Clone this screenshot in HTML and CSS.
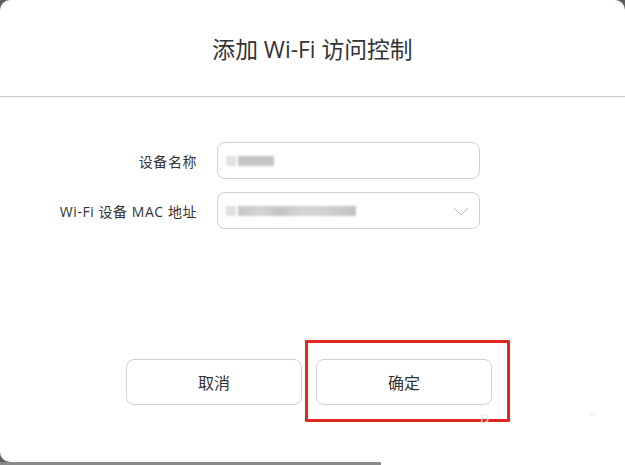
FILE: index.html
```html
<!DOCTYPE html>
<html lang="zh-CN">
<head>
<meta charset="utf-8">
<title>添加 Wi-Fi 访问控制</title>
<link rel="stylesheet" href="styles.css">
</head>
<body>
<div class="frame">
  <div class="modal">
    <div class="header"><h1 class="title">添加 Wi-Fi 访问控制</h1></div>
    <div class="form">
      <div class="row">
        <label class="label">设备名称</label>
        <div class="field">
          <span class="blur b1"></span><span class="blur b2"></span>
        </div>
      </div>
      <div class="row">
        <label class="label">Wi-Fi 设备 MAC 地址</label>
        <div class="field">
          <span class="blur b3"></span><span class="blur b4"></span>
          <svg class="chev" width="16" height="9" viewBox="0 0 16 9"><polyline points="1,1 8,8 15,1" fill="none" stroke="#b8b8b8" stroke-width="1"/></svg>
        </div>
      </div>
    </div>
    <div class="actions">
      <button class="btn">取消</button>
      <button class="btn">确定</button>
    </div>
    <div class="mark"></div>
    <span class="ghost g1">D</span><span class="ghost g2">^</span>
  </div>
  <div class="strip"><span class="strip-gray"></span><span class="strip-white"></span></div>
</div>
</body>
</html>
```
FILE: styles.css
```css
* { box-sizing: border-box; }
html, body { margin: 0; padding: 0; }
body {
  width: 625px;
  height: 465px;
  overflow: hidden;
  font-family: "Open Sans", "Noto Sans CJK SC", sans-serif;
  color: #333;
  background: #fff;
}
.frame {
  width: 625px;
  height: 465px;
  background: #5e5e5e;
  display: flex;
  flex-direction: column;
}
.modal {
  position: relative;
  width: 625px;
  height: 462px;
  background: #fff;
  border-radius: 10px 10px 0 10px;
}
.header {
  height: 97px;
  border-bottom: 1px solid #c9c9c9;
  display: flex;
  align-items: center;
  justify-content: center;
}
.title {
  margin: 0;
  font-size: 22.8px;
  font-weight: 400;
  color: #333;
}
.form {
  padding-top: 45px;
  display: flex;
  flex-direction: column;
  gap: 13px;
}
.row {
  display: flex;
  align-items: center;
}
.label {
  width: 197px;
  text-align: right;
  font-size: 14px;
  letter-spacing: 0.55px;
  color: #333;
}
.field {
  margin-left: 20px;
  width: 263px;
  height: 37px;
  border: 1px solid #cfcfcf;
  border-radius: 8px;
  display: flex;
  align-items: center;
  padding-left: 8px;
  position: relative;
}
.blur {
  display: inline-block;
  height: 10px;
  background: #c4c4c4;
  filter: blur(1px);
}
.b1 { width: 10px; background: #e2e2e2; margin-right: 2px; }
.b2 { width: 36px; }
.b3 { width: 10px; background: #e0e0e0; margin-right: 2px; }
.b4 { width: 118px; background: linear-gradient(90deg, #c6c6c6 0, #d4d4d4 20%, #c4c4c4 35%, #d6d6d6 55%, #cfcfcf 75%, #c2c2c2 100%); }
.chev {
  position: absolute;
  right: 10px;
  top: 14px;
}
.actions {
  margin-top: 130px;
  padding-left: 126px;
  display: flex;
  gap: 14px;
}
.btn {
  width: 176px;
  height: 46px;
  border: 1px solid #cfcfcf;
  border-radius: 8px;
  background: #fff;
  font-family: "Open Sans", "Noto Sans CJK SC", sans-serif;
  font-size: 16px;
  color: #333;
  padding: 0;
}
.mark {
  position: absolute;
  left: 305px;
  top: 340px;
  width: 205px;
  height: 82px;
  border: 3px solid #e0281f;
  border-radius: 1px;
}
.ghost {
  position: absolute;
  font-family: "DejaVu Sans", sans-serif;
  color: #e6e6e6;
  font-size: 12px;
}
.g1 { left: 480px; top: 412px; }
.g2 { left: 588px; top: 412px; font-size: 10px; }
.strip {
  height: 3px;
  display: flex;
}
.strip-gray { width: 381px; background: #8a8a8a; }
.strip-white { flex: 1; background: #fff; }
```
